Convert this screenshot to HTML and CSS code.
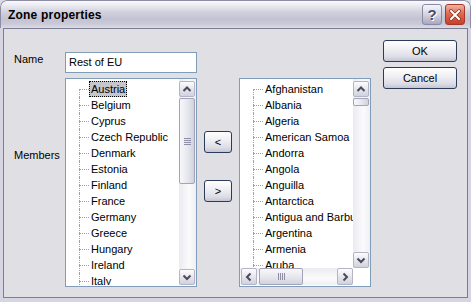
FILE: index.html
```html
<!DOCTYPE html>
<html lang="en">

<head>
    <meta charset="UTF-8">
    <title>Zone properties</title>
    <link rel="stylesheet" href="styles.css">
</head>

<body>
    <div class="window">
        <div class="titlebar">
            <span class="caption">Zone properties</span>
            <span class="capbtn help">?</span>
            <span class="capbtn close">
                <svg width="12" height="12" viewBox="0 0 12 12">
                    <path d="M2 2 L10 10 M10 2 L2 10" stroke="#8a2a1c" stroke-width="3.4" stroke-linecap="square" />
                    <path d="M2 2 L10 10 M10 2 L2 10" stroke="#fff" stroke-width="2" stroke-linecap="square" />
                </svg>
            </span>
        </div>
        <div class="frame">
            <div class="client">
                <div class="form">
                    <span class="lbl name-lbl">Name</span>
                    <div class="field">Rest of EU</div>

                    <span class="lbl members">Members</span>
                    <div class="listbox members-list">
                        <div class="tree">
                            <div class="node"><span class="branch"><i class="up"></i><i class="down"></i></span><span class="text selected">Austria</span></div>
                            <div class="node"><span class="branch"><i class="up"></i><i class="down"></i></span><span class="text">Belgium</span></div>
                            <div class="node"><span class="branch"><i class="up"></i><i class="down"></i></span><span class="text">Cyprus</span></div>
                            <div class="node"><span class="branch"><i class="up"></i><i class="down"></i></span><span class="text">Czech Republic</span></div>
                            <div class="node"><span class="branch"><i class="up"></i><i class="down"></i></span><span class="text">Denmark</span></div>
                            <div class="node"><span class="branch"><i class="up"></i><i class="down"></i></span><span class="text">Estonia</span></div>
                            <div class="node"><span class="branch"><i class="up"></i><i class="down"></i></span><span class="text">Finland</span></div>
                            <div class="node"><span class="branch"><i class="up"></i><i class="down"></i></span><span class="text">France</span></div>
                            <div class="node"><span class="branch"><i class="up"></i><i class="down"></i></span><span class="text">Germany</span></div>
                            <div class="node"><span class="branch"><i class="up"></i><i class="down"></i></span><span class="text">Greece</span></div>
                            <div class="node"><span class="branch"><i class="up"></i><i class="down"></i></span><span class="text">Hungary</span></div>
                            <div class="node"><span class="branch"><i class="up"></i><i class="down"></i></span><span class="text">Ireland</span></div>
                            <div class="node"><span class="branch"><i class="up"></i><i class="down"></i></span><span class="text">Italy</span></div>
                        </div>
                        <div class="vscroll">
                            <span class="arrow"><svg width="14" height="14" viewBox="0 0 14 14"><polyline points="3.5,9 7,5.5 10.5,9" fill="none" stroke="#4a4a5c" stroke-width="2" /></svg></span>
                            <span class="thumb big"><i></i><i></i><i></i><i></i></span>
                            <span class="track"></span>
                            <span class="arrow"><svg width="14" height="14" viewBox="0 0 14 14"><polyline points="3.5,5.5 7,9 10.5,5.5" fill="none" stroke="#4a4a5c" stroke-width="2" /></svg></span>
                        </div>
                    </div>

                    <div class="movers">
                        <span class="btn small">&lt;</span>
                        <span class="btn small">&gt;</span>
                    </div>

                    <div class="listbox wide">
                        <div class="tree">
                            <div class="node"><span class="branch"><i class="up"></i><i class="down"></i></span><span class="text">Afghanistan</span></div>
                            <div class="node"><span class="branch"><i class="up"></i><i class="down"></i></span><span class="text">Albania</span></div>
                            <div class="node"><span class="branch"><i class="up"></i><i class="down"></i></span><span class="text">Algeria</span></div>
                            <div class="node"><span class="branch"><i class="up"></i><i class="down"></i></span><span class="text">American Samoa</span></div>
                            <div class="node"><span class="branch"><i class="up"></i><i class="down"></i></span><span class="text">Andorra</span></div>
                            <div class="node"><span class="branch"><i class="up"></i><i class="down"></i></span><span class="text">Angola</span></div>
                            <div class="node"><span class="branch"><i class="up"></i><i class="down"></i></span><span class="text">Anguilla</span></div>
                            <div class="node"><span class="branch"><i class="up"></i><i class="down"></i></span><span class="text">Antarctica</span></div>
                            <div class="node"><span class="branch"><i class="up"></i><i class="down"></i></span><span class="text">Antigua and Barbuda</span></div>
                            <div class="node"><span class="branch"><i class="up"></i><i class="down"></i></span><span class="text">Argentina</span></div>
                            <div class="node"><span class="branch"><i class="up"></i><i class="down"></i></span><span class="text">Armenia</span></div>
                            <div class="node"><span class="branch"><i class="up"></i><i class="down"></i></span><span class="text">Aruba</span></div>
                        </div>
                        <div class="vscroll">
                            <span class="arrow"><svg width="14" height="14" viewBox="0 0 14 14"><polyline points="3.5,9 7,5.5 10.5,9" fill="none" stroke="#4a4a5c" stroke-width="2" /></svg></span>
                            <span class="thumb tiny"></span>
                            <span class="track"></span>
                            <span class="arrow"><svg width="14" height="14" viewBox="0 0 14 14"><polyline points="3.5,5.5 7,9 10.5,5.5" fill="none" stroke="#4a4a5c" stroke-width="2" /></svg></span>
                        </div>
                        <div class="hscroll">
                            <span class="arrow"><svg width="14" height="14" viewBox="0 0 14 14"><polyline points="8.5,3.5 5,7 8.5,10.5" fill="none" stroke="#4a4a5c" stroke-width="2" /></svg></span>
                            <span class="thumb flat"><i></i><i></i><i></i><i></i></span>
                            <span class="track"></span>
                            <span class="arrow"><svg width="14" height="14" viewBox="0 0 14 14"><polyline points="5.5,3.5 9,7 5.5,10.5" fill="none" stroke="#4a4a5c" stroke-width="2" /></svg></span>
                        </div>
                        <div class="corner"></div>
                    </div>
                </div>

                <div class="side">
                    <span class="btn">OK</span>
                    <span class="btn">Cancel</span>
                </div>
            </div>
        </div>
    </div>
</body>

</html>
```

FILE: styles.css
```css
body {
    margin: 0;
    background-color: #dadae4;
    font-family: "Liberation Sans", Arial, sans-serif;
    font-size: 11px;
    color: #000;
}

.window {
    width: 471px;
    height: 302px;
    display: flex;
    flex-direction: column;
    background-color: #d6d6e2;
    border-radius: 7px 7px 0 0;
    overflow: hidden;
}

.titlebar {
    height: 28px;
    flex: none;
    display: flex;
    align-items: center;
    padding: 0 5px 0 7px;
    box-sizing: border-box;
    border: 1px solid #8c8ca4;
    border-bottom: none;
    border-radius: 7px 7px 0 0;
    background: linear-gradient(#fbfbfd 0, #ececf2 4px, #d2d2de 11px, #c2c2d2 18px, #cacad8 23px, #dcdce6 27px);
}

.caption {
    flex: 1;
    font-size: 12px;
    font-weight: bold;
    color: #000;
    letter-spacing: 0.2px;
    padding-top: 1px;
}

.capbtn {
    width: 20px;
    height: 21px;
    box-sizing: border-box;
    border-radius: 3px;
    display: flex;
    align-items: center;
    justify-content: center;
}

.help {
    margin-right: 3px;
    border: 1px solid #8a8aa6;
    background: linear-gradient(#f6f6fa, #d4d4e2 50%, #a8a8c0);
    font-size: 15px;
    font-weight: bold;
    color: #4e4e66;
    text-shadow: 1px 1px 0 #fff;
}

.close {
    border: 1px solid #a33a2a;
    background: linear-gradient(#f2b4a4, #e06a50 45%, #c8402a);
}

.frame {
    flex: 1;
    display: flex;
    padding: 0 3px 4px 3px;
}

.client {
    flex: 1;
    display: flex;
    align-items: flex-start;
    padding: 11px 0 0 10px;
    border: 1px solid #7c7c94;
    background-color: #e0dfe3;
}

.form {
    margin-top: 12px;
    display: grid;
    grid-template-columns: 51px 132px 42px 132px;
    grid-template-rows: 21px 209px;
    row-gap: 5px;
}

.lbl {
    line-height: 14px;
}

.name-lbl {
    grid-column: 1;
    grid-row: 1;
}

.field {
    grid-column: 2;
    grid-row: 1;
    border: 1px solid #7f9db9;
    background-color: #fff;
    padding: 0 3px;
    line-height: 19px;
}

.members {
    grid-column: 1;
    grid-row: 2;
    padding-top: 70px;
}

.members-list {
    grid-column: 2;
    grid-row: 2;
}

.movers {
    grid-column: 3;
    grid-row: 2;
    display: flex;
    flex-direction: column;
    align-items: center;
    padding-top: 53px;
    gap: 27px;
}

.listbox {
    border: 1px solid #7f9db9;
    background-color: #fff;
    display: grid;
    grid-template-columns: 1fr 17px;
    overflow: hidden;
    padding-bottom: 1px;
}

.listbox.wide {
    grid-column: 4;
    grid-row: 2;
    grid-template-rows: 1fr 17px;
}

.tree {
    padding: 2px 0 0 13px;
    overflow: hidden;
    min-width: 0;
    min-height: 0;
}

.node {
    display: flex;
    height: 16px;
    white-space: nowrap;
}

.branch {
    flex: none;
    width: 10px;
    display: flex;
    flex-direction: column;
}

.branch i {
    height: 8px;
    box-sizing: border-box;
    border-left: 1px dotted #a0a0a0;
}

.branch .down {
    border-top: 1px dotted #a0a0a0;
}

.node:first-child .up {
    border-left-color: transparent;
}

.text {
    border: 1px dotted transparent;
    padding: 0 1px;
    line-height: 14px;
}

.text.selected {
    background-color: #c6c6cc;
    border-color: #000;
}

.vscroll {
    display: flex;
    flex-direction: column;
    padding-top: 2px;
    min-height: 0;
    background: linear-gradient(90deg, #ebebf0, #fbfbfd 60%, #f0f0f4);
}

.hscroll {
    display: flex;
    padding-left: 1px;
    min-width: 0;
    background: linear-gradient(#ebebf0, #fbfbfd 60%, #f0f0f4);
}

.corner {
    background-color: #fff;
}

.arrow {
    flex: none;
    box-sizing: border-box;
    border: 1px solid #b4b4c6;
    border-radius: 2px;
    background: linear-gradient(#fdfdfe, #e6e6ee 50%, #d2d2de);
    display: flex;
    align-items: center;
    justify-content: center;
}

.vscroll .arrow {
    width: 16px;
    height: 16px;
}

.hscroll .arrow {
    width: 16px;
    height: 17px;
}

.track {
    flex: 1;
}

.thumb {
    flex: none;
    box-sizing: border-box;
    border: 1px solid #a4a4b8;
    border-radius: 2px;
    display: flex;
    align-items: center;
    justify-content: center;
    gap: 1px;
}

.thumb.big {
    width: 16px;
    height: 86px;
    margin-top: 1px;
    flex-direction: column;
    background: linear-gradient(90deg, #f8f8fb, #e4e4ec 60%, #d2d2de);
}

.thumb.big i {
    width: 7px;
    height: 1px;
    background-color: #8e8ea4;
}

.thumb.tiny {
    width: 16px;
    height: 8px;
    margin-top: 1px;
    background: linear-gradient(90deg, #f8f8fb, #e4e4ec 60%, #d2d2de);
}

.thumb.flat {
    width: 44px;
    height: 17px;
    margin-left: 2px;
    background: linear-gradient(#f8f8fb, #e4e4ec 60%, #d2d2de);
}

.thumb.flat i {
    width: 1px;
    height: 7px;
    background-color: #8e8ea4;
}

.side {
    margin-left: 12px;
    display: flex;
    flex-direction: column;
    gap: 5px;
}

.btn {
    width: 74px;
    height: 22px;
    box-sizing: border-box;
    border: 1px solid #2c3c58;
    border-radius: 3px;
    background: linear-gradient(#ffffff, #f2f2f6 35%, #dcdce6 80%, #c4c4d4);
    display: flex;
    align-items: center;
    justify-content: center;
    font-size: 11px;
}

.btn.small {
    width: 28px;
}
```
